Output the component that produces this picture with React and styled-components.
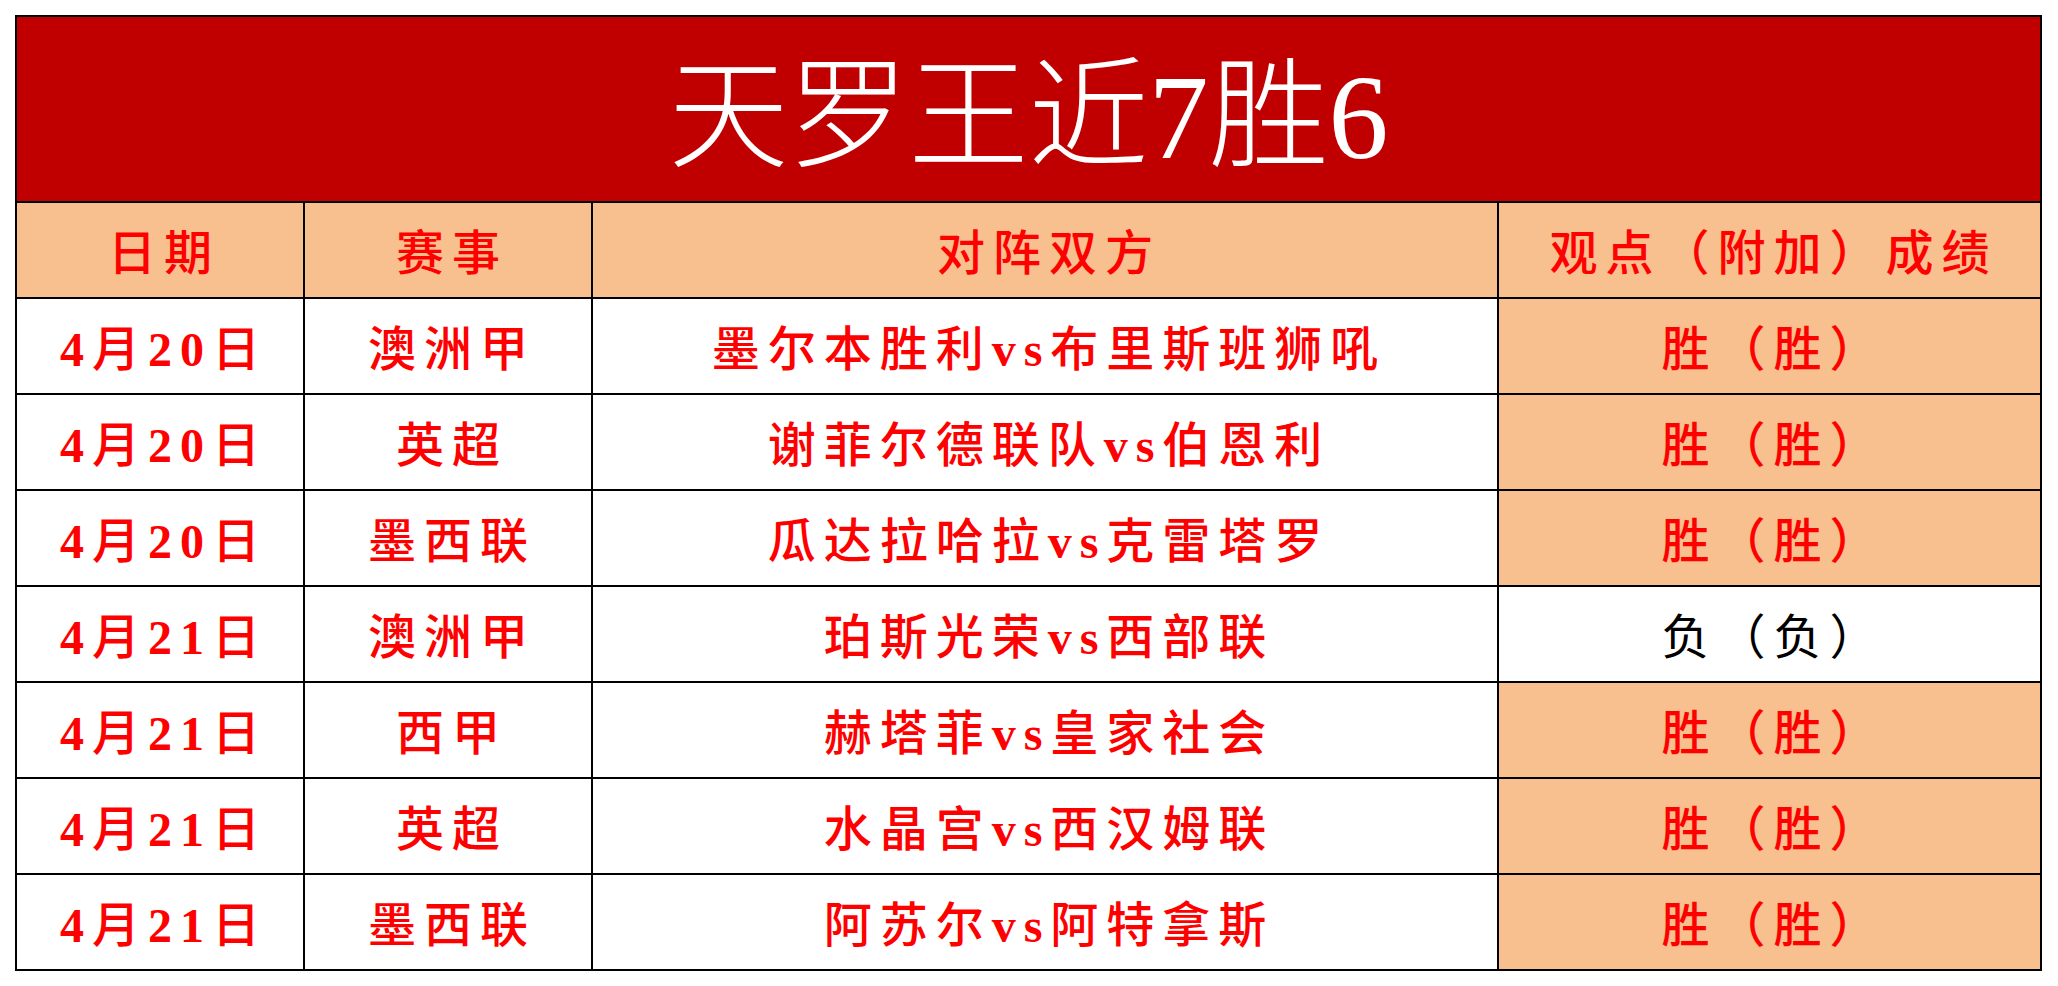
import React from "react";
import styled, { createGlobalStyle } from "styled-components";

const GlobalStyle = createGlobalStyle`
  html, body {
    margin: 0;
    padding: 0;
    background: #ffffff;
  }
  body {
    font-family: "Liberation Serif", "Noto Sans CJK SC", serif;
  }
`;

const rows = [
  { date: "4月20日", league: "澳洲甲", match: "墨尔本胜利vs布里斯班狮吼", result: "胜（胜）", win: true },
  { date: "4月20日", league: "英超", match: "谢菲尔德联队vs伯恩利", result: "胜（胜）", win: true },
  { date: "4月20日", league: "墨西联", match: "瓜达拉哈拉vs克雷塔罗", result: "胜（胜）", win: true },
  { date: "4月21日", league: "澳洲甲", match: "珀斯光荣vs西部联", result: "负（负）", win: false },
  { date: "4月21日", league: "西甲", match: "赫塔菲vs皇家社会", result: "胜（胜）", win: true },
  { date: "4月21日", league: "英超", match: "水晶宫vs西汉姆联", result: "胜（胜）", win: true },
  { date: "4月21日", league: "墨西联", match: "阿苏尔vs阿特拿斯", result: "胜（胜）", win: true },
];

const Sheet = styled.div`
  display: grid;
  grid-template-columns: 286px 286px 904px 541px;
  grid-template-rows: 184px 94px repeat(7, 94px);
  gap: 2px;
  padding: 2px;
  width: 2027px;
  box-sizing: border-box;
  margin: 15px 0 0 15px;
  background: #000000;
`;

const Title = styled.div`
  grid-column: 1 / -1;
  display: flex;
  align-items: center;
  justify-content: center;
  padding-top: 18px;
  box-sizing: border-box;
  background: #c00000;
  color: #ffffff;
  font-size: 120px;
  font-weight: 300;
  line-height: 1;
`;

const Cell = styled.div`
  display: flex;
  align-items: center;
  justify-content: center;
  padding: 8px 0 0 8px;
  box-sizing: border-box;
  background: ${(p) => (p.$shade ? "#f8bf8f" : "#ffffff")};
  color: ${(p) => (p.$plain ? "#000000" : "#ff0000")};
  font-size: 48px;
  font-weight: ${(p) => (p.$plain ? 400 : 500)};
  letter-spacing: 8px;
  line-height: 1;
  white-space: nowrap;
`;

const Latin = styled.span`
  font-weight: 700;
`;

// digits and "vs" are bold serif in the sheet, CJK stays medium
const mixed = (text) =>
  text.split(/([0-9a-z]+)/).map((part, i) =>
    /^[0-9a-z]+$/.test(part) ? <Latin key={i}>{part}</Latin> : part
  );

export default function App() {
  return (
    <>
      <GlobalStyle />
      <Sheet>
        <Title>天罗王近7胜6</Title>
        <Cell $shade>日期</Cell>
        <Cell $shade>赛事</Cell>
        <Cell $shade>对阵双方</Cell>
        <Cell $shade>观点（附加）成绩</Cell>
        {rows.map((r, i) => (
          <React.Fragment key={i}>
            <Cell>{mixed(r.date)}</Cell>
            <Cell>{r.league}</Cell>
            <Cell>{mixed(r.match)}</Cell>
            <Cell $shade={r.win} $plain={!r.win}>
              {r.result}
            </Cell>
          </React.Fragment>
        ))}
      </Sheet>
    </>
  );
}
